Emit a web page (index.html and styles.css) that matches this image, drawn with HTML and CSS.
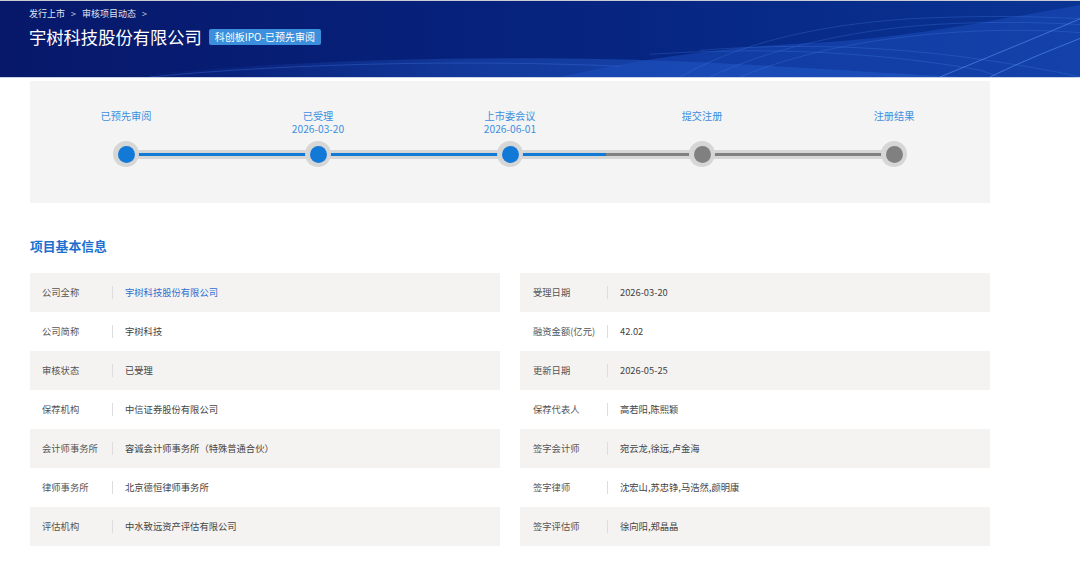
FILE: index.html
```html
<!DOCTYPE html>
<html lang="zh-CN">
<head>
    <meta charset="UTF-8">
    <meta name="viewport" content="width=device-width, initial-scale=1.0">
    <title>宇树科技股份有限公司</title>
    <link rel="stylesheet" href="styles.css">
</head>
<body>
    <header class="banner">
        <svg class="banner-bg" viewBox="0 0 1080 77" preserveAspectRatio="none">
            <defs>
                <linearGradient id="base" x1="0" y1="0" x2="1" y2="0">
                    <stop offset="0" stop-color="#07186a"/>
                    <stop offset="0.55" stop-color="#062480"/>
                    <stop offset="1" stop-color="#0a3494"/>
                </linearGradient>
                <linearGradient id="glow" x1="0" y1="0" x2="1" y2="0">
                    <stop offset="0" stop-color="#1d55c8" stop-opacity="0"/>
                    <stop offset="0.4" stop-color="#2a66d8" stop-opacity="0.6"/>
                    <stop offset="1" stop-color="#2e6ee0" stop-opacity="0.9"/>
                </linearGradient>
            </defs>
            <rect width="1080" height="77" fill="url(#base)"/>
            <path d="M120 77 C 300 58, 520 54, 700 62 C 820 68, 900 74, 960 77 Z" fill="url(#glow)" opacity="0.55"/>
            <path d="M560 77 C 640 58, 730 46, 820 42 C 920 36, 1000 18, 1080 4 L1080 77 Z" fill="#1b50c0" opacity="0.5"/>
            <g fill="none" stroke="#4a86ee" stroke-width="0.6" opacity="0.45">
                <path d="M680 77 C 740 42, 820 24, 910 18 C 990 14, 1040 16, 1080 18"/>
                <path d="M710 77 C 770 48, 850 30, 930 24 C 1000 20, 1050 22, 1080 24"/>
                <path d="M740 77 C 800 52, 870 38, 950 32 C 1010 28, 1050 30, 1080 32"/>
                <path d="M700 50 C 800 42, 900 46, 1000 62 C 1030 67, 1060 72, 1080 77"/>
                <path d="M650 54 C 770 46, 880 52, 980 70 L 1000 77"/>
            </g>
            <g fill="none" stroke="#5b95f2" stroke-width="1" opacity="0.6">
                <path d="M940 77 C 980 60, 1030 40, 1080 18"/>
                <path d="M990 77 C 1020 62, 1050 50, 1080 38"/>
            </g>
            <path d="M150 77 C 300 62, 480 60, 620 66" fill="none" stroke="#3a70d8" stroke-width="1" opacity="0.4"/>
        </svg>
        <div class="banner-inner">
            <nav class="crumbs">
                <span>发行上市</span><span class="sep">&gt;</span><span>审核项目动态</span><span class="sep">&gt;</span>
            </nav>
            <div class="title-row">
                <h1>宇树科技股份有限公司</h1>
                <span class="badge">科创板IPO-已预先审阅</span>
            </div>
        </div>
    </header>

    <main class="page">
        <section class="steps">
            <div class="step done">
                <div class="step-label"><span>已预先审阅</span></div>
                <div class="dot"></div>
            </div>
            <div class="step done">
                <div class="step-label"><span>已受理</span><span>2026-03-20</span></div>
                <div class="dot"></div>
            </div>
            <div class="step done half">
                <div class="step-label"><span>上市委会议</span><span>2026-06-01</span></div>
                <div class="dot"></div>
            </div>
            <div class="step">
                <div class="step-label"><span>提交注册</span></div>
                <div class="dot"></div>
            </div>
            <div class="step last">
                <div class="step-label"><span>注册结果</span></div>
                <div class="dot"></div>
            </div>
        </section>

        <h2 class="section-title">项目基本信息</h2>

        <section class="info">
            <div class="info-col">
                <div class="row"><span class="key">公司全称</span><span class="val link">宇树科技股份有限公司</span></div>
                <div class="row"><span class="key">公司简称</span><span class="val">宇树科技</span></div>
                <div class="row"><span class="key">审核状态</span><span class="val">已受理</span></div>
                <div class="row"><span class="key">保荐机构</span><span class="val">中信证券股份有限公司</span></div>
                <div class="row"><span class="key">会计师事务所</span><span class="val">容诚会计师事务所（特殊普通合伙）</span></div>
                <div class="row"><span class="key">律师事务所</span><span class="val">北京德恒律师事务所</span></div>
                <div class="row"><span class="key">评估机构</span><span class="val">中水致远资产评估有限公司</span></div>
            </div>
            <div class="info-col right">
                <div class="row"><span class="key">受理日期</span><span class="val">2026-03-20</span></div>
                <div class="row"><span class="key">融资金额(亿元)</span><span class="val">42.02</span></div>
                <div class="row"><span class="key">更新日期</span><span class="val">2026-05-25</span></div>
                <div class="row"><span class="key">保荐代表人</span><span class="val">高若阳,陈熙颖</span></div>
                <div class="row"><span class="key">签字会计师</span><span class="val">宛云龙,徐远,卢金海</span></div>
                <div class="row"><span class="key">签字律师</span><span class="val">沈宏山,苏忠铮,马浩然,颜明康</span></div>
                <div class="row"><span class="key">签字评估师</span><span class="val">徐向阳,郑晶晶</span></div>
            </div>
        </section>
    </main>
</body>
</html>
```

FILE: styles.css
```css
body {
    margin: 0;
    background: #ffffff;
    font-family: "Microsoft YaHei", "Noto Sans CJK SC", "Noto Sans", sans-serif;
    color: #444;
}

/* header banner */
.banner {
    position: relative;
    height: 76px;
    border-top: 1px solid #c9ccd4;
    border-bottom: 1px solid #c8d2e6;
    overflow: hidden;
}
.banner-bg {
    position: absolute;
    left: 0;
    top: 0;
    width: 100%;
    height: 100%;
}
.banner-inner {
    position: relative;
    padding: 6px 0 0 29px;
}
.crumbs {
    display: flex;
    align-items: center;
    font-size: 9px;
    line-height: 14px;
    color: #dfe5f3;
}
.crumbs .sep {
    margin: 0 6px;
    font-size: 9px;
    color: #c4cde3;
}
.title-row {
    display: flex;
    align-items: center;
    margin-top: 4px;
}
.title-row h1 {
    margin: 0;
    font-size: 17.3px;
    font-weight: normal;
    line-height: 24px;
    color: #ffffff;
}
.badge {
    margin-left: 7px;
    padding: 0 6px;
    height: 16px;
    line-height: 16px;
    font-size: 10px;
    color: #ffffff;
    background: #3b8fdc;
    border-radius: 2px;
}

/* content */
.page {
    padding: 3px 30px 30px;
    width: 960px;
}

.steps {
    display: grid;
    grid-template-columns: repeat(5, 1fr);
    background: #f4f4f4;
    padding: 28px 0 36px;
}
.step {
    position: relative;
    display: flex;
    flex-direction: column;
    align-items: center;
}
.step-label {
    display: flex;
    flex-direction: column;
    align-items: center;
    height: 32px;
    font-size: 10.2px;
    line-height: 13px;
    color: #3d8fdf;
}
.dot {
    position: relative;
    z-index: 2;
    width: 26px;
    height: 26px;
    border-radius: 50%;
    background: #d6d6d6;
    display: flex;
    align-items: center;
    justify-content: center;
}
.dot::before {
    content: "";
    width: 17px;
    height: 17px;
    border-radius: 50%;
    background: #808080;
}
.step.done .dot::before {
    background: #1379d6;
}
/* track between this step and the next one */
.step::after {
    content: "";
    position: absolute;
    z-index: 1;
    left: 50%;
    width: 100%;
    top: 41px;
    height: 3px;
    border-top: 3px solid #d6d6d6;
    border-bottom: 3px solid #d6d6d6;
    background: #808080;
}
.step.done::after {
    background: #1379d6;
}
.step.half::after {
    background: linear-gradient(to right, #1379d6 50%, #808080 50%);
}
.step.last::after {
    display: none;
}

.section-title {
    margin: 34px 0 18px;
    font-size: 12.8px;
    line-height: 18px;
    font-weight: bold;
    color: #1a6fcf;
}

.info {
    display: grid;
    grid-template-columns: 1fr 1fr;
    gap: 20px;
}
.row {
    display: flex;
    align-items: center;
    height: 39px;
    font-size: 9.3px;
    line-height: 13px;
    color: #555;
}
.row:nth-child(odd) {
    background: #f4f3f2;
}
.key {
    width: 70px;
    padding-left: 12px;
    white-space: nowrap;
    border-right: 1px solid #dddddd;
}
.right .key {
    width: 74px;
    padding-left: 13px;
}
.val {
    padding-left: 12px;
    color: #444;
}
.val.link {
    color: #2c6fcf;
}
```
